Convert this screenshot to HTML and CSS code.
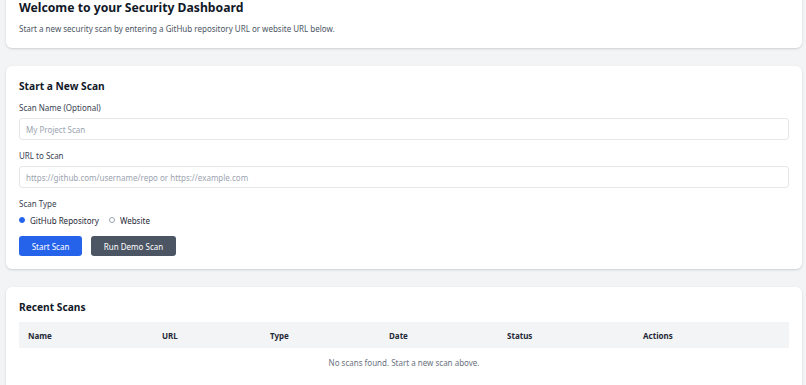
FILE: index.html
```html
<!DOCTYPE html>
<html lang="en">
<head>
<meta charset="utf-8">
<title>Security Dashboard</title>
<link rel="stylesheet" href="styles.css">
</head>
<body>
<main class="page">
  <section class="card welcome">
    <h1 class="title">Welcome to your Security Dashboard</h1>
    <p class="desc">Start a new security scan by entering a GitHub repository URL or website URL below.</p>
  </section>

  <section class="card scan">
    <h2 class="heading">Start a New Scan</h2>
    <div class="field">
      <label class="label">Scan Name (Optional)</label>
      <div class="input"><span class="placeholder">My Project Scan</span></div>
    </div>
    <div class="field">
      <label class="label">URL to Scan</label>
      <div class="input"><span class="placeholder">https://github.com/username/repo or https://example.com</span></div>
    </div>
    <div class="field">
      <label class="label">Scan Type</label>
      <div class="radios">
        <span class="radio"><span class="dot checked"></span>GitHub Repository</span>
        <span class="radio"><span class="dot"></span>Website</span>
      </div>
    </div>
    <div class="buttons">
      <button class="btn primary">Start Scan</button>
      <button class="btn secondary">Run Demo Scan</button>
    </div>
  </section>

  <section class="card recent">
    <h2 class="heading">Recent Scans</h2>
    <div class="table">
      <div class="thead">
        <span>Name</span><span>URL</span><span>Type</span><span>Date</span><span>Status</span><span>Actions</span>
      </div>
      <div class="empty">No scans found. Start a new scan above.</div>
    </div>
  </section>
</main>
</body>
</html>
```

FILE: styles.css
```css
* { box-sizing: border-box; }
html, body {
  margin: 0;
  padding: 0;
  background: #f3f4f6;
  font-family: "Noto Sans", "Open Sans", sans-serif;
  color: #111827;
}
.page {
  display: flex;
  flex-direction: column;
  gap: 18px;
  padding: 0 4px 0 6px;
  margin-top: -14px;
}
.card {
  background: #fff;
  border-radius: 6px;
  box-shadow: 0 1px 3px rgba(0,0,0,0.1), 0 1px 2px rgba(0,0,0,0.06);
  padding: 13px;
}
.title {
  margin: 0;
  font-size: 12.2px;
  line-height: 18px;
  font-weight: 700;
}
.desc {
  margin: 5px 0 0;
  font-size: 8px;
  line-height: 14px;
  color: #4b5563;
}
.welcome { padding-bottom: 12px; }
.heading {
  margin: 0;
  font-size: 10.2px;
  line-height: 14px;
  font-weight: 700;
}
.field {
  display: flex;
  flex-direction: column;
  gap: 3px;
  margin-top: 8px;
}
.field + .field { margin-top: 9px; }
.label {
  font-size: 8px;
  line-height: 14px;
  color: #374151;
}
.input {
  height: 22px;
  border: 1px solid #e5e7eb;
  border-radius: 3px;
  padding: 0 6px;
  display: flex;
  align-items: center;
}
.placeholder {
  font-size: 8px;
  color: #9ca3af;
}
.radios {
  display: flex;
  gap: 10px;
  height: 14px;
  align-items: center;
  margin-top: -1px;
}
.radio {
  display: flex;
  align-items: center;
  gap: 5px;
  font-size: 8px;
  color: #1f2937;
}
.dot {
  width: 6px;
  height: 6px;
  border-radius: 50%;
  border: 1px solid #9ca3af;
}
.dot.checked {
  border-color: #2563eb;
  background: #2563eb;
}
.buttons {
  display: flex;
  gap: 9px;
  margin-top: 9px;
}
.btn {
  font-family: inherit;
  border: none;
  border-radius: 3px;
  height: 20px;
  font-size: 8px;
  color: #fff;
  padding: 0;
  white-space: nowrap;
}
.primary { background: #2563eb; width: 63px; }
.secondary { background: #4b5563; width: 85px; }
.recent { padding-bottom: 40px; }
.table { margin-top: 8px; }
.thead {
  display: grid;
  grid-template-columns: 134px 108px 119px 118px 136px 1fr;
  background: #f3f4f6;
  height: 26px;
  align-items: center;
  padding: 0 9px;
  font-size: 8px;
  font-weight: 700;
  color: #1f2937;
}
.empty {
  text-align: center;
  font-size: 8px;
  color: #6b7280;
  padding-top: 9px;
  line-height: 12px;
}
```
